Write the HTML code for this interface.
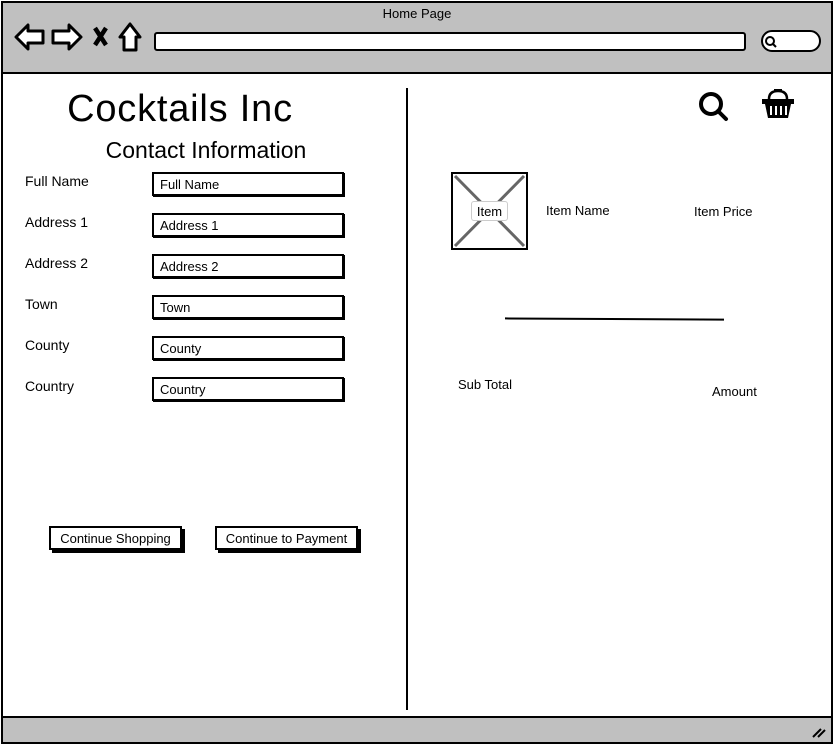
<!DOCTYPE html>
<html><head><style>
*{margin:0;padding:0;box-sizing:border-box}
body{width:834px;height:745px;background:#fff;font-family:"Liberation Sans",sans-serif;position:relative;overflow:hidden;color:#000}
.a{position:absolute}
.frame{left:1px;top:1px;width:832px;height:743px;border:2px solid #000;background:#fff}
.top{left:1px;top:1px;width:832px;height:73px;background:#c0c0c0;border:2px solid #000}
.bot{left:1px;top:716px;width:832px;height:28px;background:#c0c0c0;border:2px solid #000}
.lbl{font-size:14px}
.inp{width:192px;height:24px;border:2px solid #000;font-size:13px;padding:3px 0 0 6px;box-shadow:1px 1px 0 #000}
.btn{height:24px;border:2px solid #000;font-size:13px;text-align:center;padding-top:3px;box-shadow:3px 3px 0 #000;background:#fff}
</style></head><body>
<div class="a frame"></div>
<div class="a top"></div>
<div class="a" style="left:0;top:6px;width:834px;text-align:center;font-size:13px">Home Page</div>
<svg class="a" style="left:14px;top:22px" width="130" height="32" viewBox="0 0 130 32">
<path d="M2 15 L14 3 L14 9 L29 9 L29 21 L14 21 L14 27 Z" fill="#fff" stroke="#000" stroke-width="3" stroke-linejoin="round"/>
<path d="M67 15 L55 3 L55 9 L39 9 L39 21 L55 21 L55 27 Z" fill="#fff" stroke="#000" stroke-width="3" stroke-linejoin="round"/>
<path d="M81 6 L92 23 M92 6 L81 23" stroke="#000" stroke-width="4.5"/>
<path d="M116 2 L106 15 L110 15 L110 28 L122 28 L122 15 L126 15 Z" fill="#fff" stroke="#000" stroke-width="3" stroke-linejoin="round"/>
</svg>
<div class="a" style="left:154px;top:32px;width:592px;height:19px;background:#fff;border:2px solid #000;border-radius:3px"></div>
<div class="a" style="left:761px;top:30px;width:60px;height:22px;background:#fff;border:2px solid #000;border-radius:11px"></div>
<svg class="a" style="left:764px;top:35px" width="14" height="14"><circle cx="6" cy="6" r="4" fill="none" stroke="#000" stroke-width="2"/><path d="M9 9 L12 12" stroke="#000" stroke-width="2"/></svg>
<div class="a bot"></div>
<svg class="a" style="left:812px;top:726px" width="14" height="12"><path d="M1 11 L9 3 M6 11 L13 4" stroke="#000" stroke-width="2"/></svg>
<div class="a" style="left:406px;top:88px;width:2px;height:622px;background:#000"></div>

<div class="a" style="left:64px;top:88px;width:232px;text-align:center;font-size:38px;letter-spacing:0.8px;white-space:nowrap">Cocktails Inc</div>
<div class="a" style="left:96px;top:137px;width:220px;text-align:center;font-size:23px;white-space:nowrap">Contact Information</div>

<div class="a lbl" style="left:25px;top:173px">Full Name</div>
<div class="a inp" style="left:152px;top:172px">Full Name</div>
<div class="a lbl" style="left:25px;top:214px">Address 1</div>
<div class="a inp" style="left:152px;top:213px">Address 1</div>
<div class="a lbl" style="left:25px;top:255px">Address 2</div>
<div class="a inp" style="left:152px;top:254px">Address 2</div>
<div class="a lbl" style="left:25px;top:296px">Town</div>
<div class="a inp" style="left:152px;top:295px">Town</div>
<div class="a lbl" style="left:25px;top:337px">County</div>
<div class="a inp" style="left:152px;top:336px">County</div>
<div class="a lbl" style="left:25px;top:378px">Country</div>
<div class="a inp" style="left:152px;top:377px">Country</div>

<div class="a btn" style="left:49px;top:526px;width:133px">Continue Shopping</div>
<div class="a btn" style="left:215px;top:526px;width:143px">Continue to Payment</div>

<svg class="a" style="left:696px;top:89px" width="34" height="34"><circle cx="15" cy="15" r="10" fill="none" stroke="#000" stroke-width="4"/><path d="M22 22 L30 30" stroke="#000" stroke-width="4" stroke-linecap="round"/></svg>
<svg class="a" style="left:760px;top:89px" width="36" height="32"><path d="M9 10 Q9 2 18 2 Q27 2 27 10" fill="none" stroke="#000" stroke-width="2.5"/><rect x="14" y="0" width="8" height="3" fill="#000"/><rect x="2" y="10" width="32" height="5" fill="#000"/><path d="M5 15 L31 15 L28 29 L8 29 Z" fill="#000"/><path d="M11 17 V26 M16 17 V26 M21 17 V26 M26 17 V26" stroke="#fff" stroke-width="2"/></svg>

<div class="a" style="left:451px;top:172px;width:77px;height:78px;border:2px solid #000;background:#fff"></div>
<svg class="a" style="left:453px;top:174px" width="73" height="74"><path d="M2 2 L71 72 M71 2 L2 72" stroke="#666" stroke-width="3"/></svg>
<div class="a" style="left:471px;top:201px;width:37px;height:20px;background:#fff;border:1px solid #ccc;border-radius:3px;font-size:13px;text-align:center;padding-top:2px">Item</div>
<div class="a" style="left:546px;top:203px;font-size:13px">Item Name</div>
<div class="a" style="left:694px;top:204px;font-size:13px">Item Price</div>
<div class="a" style="left:505px;top:318px;width:219px;height:2px;background:#000;transform:rotate(0.3deg)"></div>
<div class="a" style="left:458px;top:377px;font-size:13px">Sub Total</div>
<div class="a" style="left:712px;top:384px;font-size:13px">Amount</div>
</body></html>
